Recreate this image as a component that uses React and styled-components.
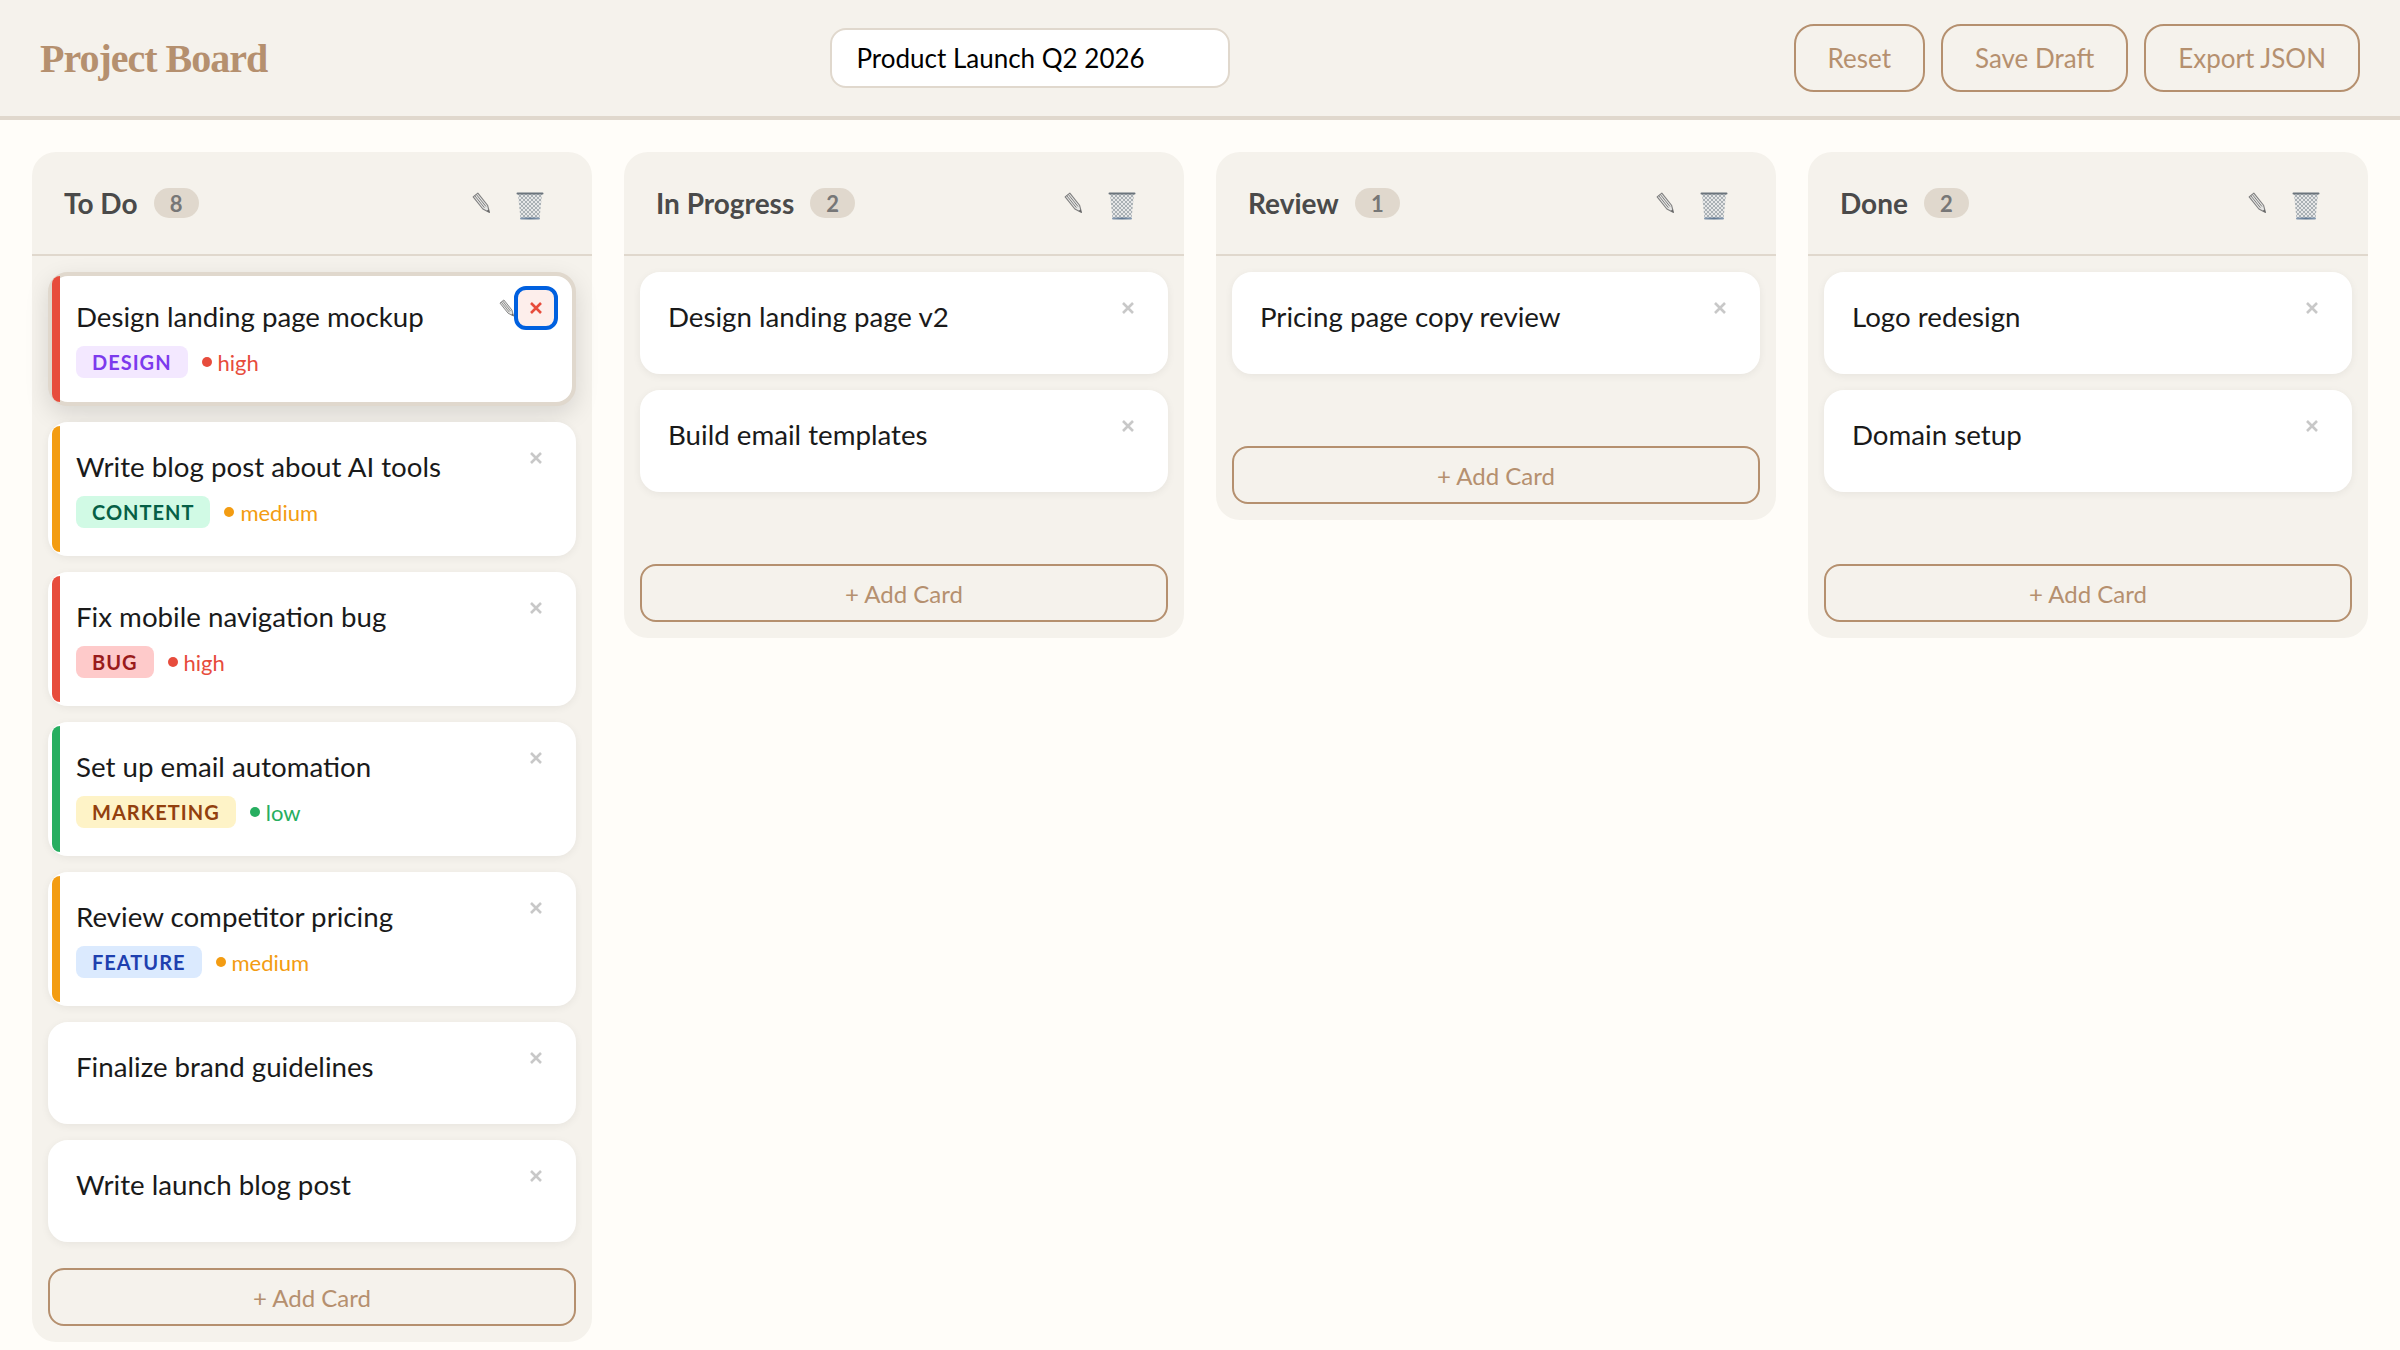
import React from 'react';
import styled, { createGlobalStyle } from 'styled-components';

const GlobalStyle = createGlobalStyle`
  html, body {
    margin: 0;
    background: #fffdf9;
    font-family: Lato, "Open Sans", sans-serif;
  }
  * {
    box-sizing: border-box;
  }
`;

const Page = styled.div`
  min-height: 100vh;
  background: #fffdf9;
`;

const Header = styled.header`
  display: flex;
  align-items: center;
  justify-content: space-between;
  height: 120px;
  padding: 0 40px;
  background: #f5f2ec;
  border-bottom: 4px solid #e0d8cd;
`;

const Logo = styled.h1`
  margin: 0;
  font-family: "Liberation Serif", serif;
  font-size: 40px;
  font-weight: 700;
  color: #b5906f;
  letter-spacing: -1px;
`;

const BoardName = styled.input`
  width: 400px;
  height: 60px;
  padding: 0 24px;
  font-family: Lato, sans-serif;
  font-size: 26px;
  color: #000;
  background: #fff;
  border: 2px solid #e0d8cd;
  border-radius: 16px;
`;

const Actions = styled.div`
  display: flex;
  gap: 16px;
`;

const HeaderButton = styled.button`
  height: 68px;
  padding: 0 32px;
  font-family: Lato, sans-serif;
  font-size: 26px;
  color: #b5906f;
  background: transparent;
  border: 2px solid #b5906f;
  border-radius: 20px;
`;

const Board = styled.main`
  display: grid;
  grid-template-columns: repeat(4, 560px);
  gap: 32px;
  align-items: start;
  padding: 32px;
`;

const Column = styled.section`
  background: #f5f2ec;
  border-radius: 24px;
`;

const ColumnHeader = styled.div`
  display: flex;
  align-items: center;
  height: 104px;
  padding: 0 48px 0 32px;
  border-bottom: 2px solid #e0d8cd;
`;

const ColumnTitle = styled.h2`
  margin: 0;
  font-size: 28px;
  font-weight: 700;
  color: #4a4a4a;
`;

const CountBadge = styled.span`
  display: flex;
  align-items: center;
  justify-content: center;
  width: 45px;
  height: 30px;
  margin-left: 16px;
  font-size: 22px;
  font-weight: 700;
  color: #777;
  background: #e0d8cd;
  border-radius: 15px;
`;

const ColumnTools = styled.div`
  display: flex;
  align-items: center;
  gap: 26px;
  margin-left: auto;
`;

const CardList = styled.div`
  display: flex;
  flex-direction: column;
  gap: 16px;
  padding: 16px 16px ${({ $spare }) => ($spare ? '72px' : '26px')};
`;

const Card = styled.article`
  position: relative;
  display: flex;
  background: #fff;
  border: 4px solid ${({ $active }) => ($active ? '#e0d8cd' : '#fff')};
  border-radius: 20px;
  box-shadow: ${({ $active }) => ($active ? '0 8px 24px rgba(0, 0, 0, 0.12)' : '0 2px 8px rgba(0, 0, 0, 0.06)')};
`;

const Stripe = styled.div`
  flex: none;
  width: 8px;
  background: ${({ $color }) => $color || 'transparent'};
  border-radius: 12px 0 0 12px;
`;

const CardBody = styled.div`
  flex: 1;
  padding: 22px 16px 24px;
`;

const CardTitle = styled.div`
  margin-bottom: 10px;
  font-size: 27.7px;
  line-height: 38px;
  color: #1a1a1a;
`;

const CardMeta = styled.div`
  display: flex;
  align-items: center;
  gap: 14px;
`;

const Tag = styled.span`
  height: 32px;
  padding: 0 16px;
  font-size: 20px;
  font-weight: 700;
  line-height: 32px;
  letter-spacing: 1px;
  text-transform: uppercase;
  color: ${({ $color }) => $color};
  background: ${({ $bg }) => $bg};
  border-radius: 8px;
`;

const Priority = styled.span`
  display: flex;
  align-items: center;
  gap: 6px;
  font-size: 22px;
  color: ${({ $color }) => $color};

  &::before {
    content: '';
    width: 10px;
    height: 10px;
    background: currentColor;
    border-radius: 50%;
  }
`;

const CardTools = styled.div`
  position: absolute;
  top: 10px;
  right: 14px;
  display: flex;
  align-items: center;
`;

const CloseButton = styled.button`
  display: flex;
  align-items: center;
  justify-content: center;
  width: 44px;
  height: 44px;
  padding: 0;
  font-family: Lato, sans-serif;
  color: ${({ $active }) => ($active ? '#e74c3c' : '#c8c8c8')};
  background: ${({ $active }) => ($active ? '#fdeeeb' : 'transparent')};
  border: ${({ $active }) => ($active ? '4px solid #0060df' : '0')};
  border-radius: 12px;
`;

const AddCard = styled.button`
  display: block;
  width: 528px;
  height: 58px;
  margin: 0 16px 16px;
  font-family: Lato, sans-serif;
  font-size: 24px;
  color: #b5906f;
  background: transparent;
  border: 2px solid #b5906f;
  border-radius: 16px;
`;

const IconSlot = styled.span`
  display: flex;
  margin-top: ${({ $drop }) => $drop || 0}px;
`;

const PencilIcon = ({ size = 18 }) => (
  <svg width={size} height={size * 1.17} viewBox="0 0 18 21">
    <path d="M5.84 1.13 L1.16 4.88 L10.86 17 L17.5 20.5 L15.54 13.2 Z" fill="#e4e4e2" stroke="#808080" strokeWidth="1.1" strokeLinejoin="round" />
    <path d="M4.28 2.38 L13.98 14.5 M2.72 3.63 L12.42 15.7" stroke="#808080" strokeWidth="1" />
    <path d="M14.6 18.9 L17.5 20.5 L16.7 17.2 Z" fill="#666" />
  </svg>
);

const TrashIcon = () => (
  <svg width="28" height="28" viewBox="0 0 28 28">
    <defs>
      <pattern id="mesh" width="4" height="4" patternUnits="userSpaceOnUse">
        <rect width="4" height="4" fill="#e6e7e7" />
        <path d="M0 0 L4 4 M4 0 L0 4" stroke="#a3a9ae" strokeWidth="0.9" />
      </pattern>
      <linearGradient id="band" x1="0" x2="1" y1="0" y2="0">
        <stop offset="0" stopColor="#8a9db3" />
        <stop offset="0.5" stopColor="#5f7690" />
        <stop offset="1" stopColor="#8a9db3" />
      </linearGradient>
    </defs>
    <path d="M2 2 L26 2 L23.5 27 L4.5 27 Z" fill="url(#mesh)" />
    <rect x="0.5" y="0.5" width="27" height="2" rx="1" fill="#6b747c" />
    <rect x="4" y="25.4" width="20" height="2.2" rx="1" fill="url(#band)" />
  </svg>
);

const columns = [
  {
    title: 'To Do',
    count: 8,
    cards: [
      { title: 'Design landing page mockup', stripe: '#e74c3c', tag: 'design', priority: 'high', active: true },
      { title: 'Write blog post about AI tools', stripe: '#f39c12', tag: 'content', priority: 'medium' },
      { title: 'Fix mobile navigation bug', stripe: '#e74c3c', tag: 'bug', priority: 'high' },
      { title: 'Set up email automation', stripe: '#27ae60', tag: 'marketing', priority: 'low' },
      { title: 'Review competitor pricing', stripe: '#f39c12', tag: 'feature', priority: 'medium' },
      { title: 'Finalize brand guidelines' },
      { title: 'Write launch blog post' },
    ],
  },
  {
    title: 'In Progress',
    count: 2,
    spare: true,
    cards: [{ title: 'Design landing page v2' }, { title: 'Build email templates' }],
  },
  {
    title: 'Review',
    count: 1,
    spare: true,
    cards: [{ title: 'Pricing page copy review' }],
  },
  {
    title: 'Done',
    count: 2,
    spare: true,
    cards: [{ title: 'Logo redesign' }, { title: 'Domain setup' }],
  },
];

const tagColors = {
  design: { bg: '#f3e8ff', color: '#7c3aed' },
  content: { bg: '#d1fae5', color: '#065f46' },
  bug: { bg: '#fecaca', color: '#991b1b' },
  marketing: { bg: '#fef3c7', color: '#92400e' },
  feature: { bg: '#dbeafe', color: '#1e40af' },
};

const priorityColors = {
  high: '#e74c3c',
  medium: '#f39c12',
  low: '#27ae60',
};

const BoardCard = ({ card }) => (
  <Card $active={card.active}>
    <Stripe $color={card.stripe} />
    <CardBody>
      <CardTitle>{card.title}</CardTitle>
      {card.tag && (
        <CardMeta>
          <Tag $bg={tagColors[card.tag].bg} $color={tagColors[card.tag].color}>{card.tag}</Tag>
          <Priority $color={priorityColors[card.priority]}>{card.priority}</Priority>
        </CardMeta>
      )}
    </CardBody>
    <CardTools>
      {card.active && <IconSlot><PencilIcon size={15} /></IconSlot>}
      <CloseButton $active={card.active}>
        <svg width="14" height="14" viewBox="0 0 14 14">
          <path d="M2 2 L12 12 M12 2 L2 12" stroke="currentColor" strokeWidth="2.6" />
        </svg>
      </CloseButton>
    </CardTools>
  </Card>
);

const App = () => (
  <Page>
    <GlobalStyle />
    <Header>
      <Logo>Project Board</Logo>
      <BoardName defaultValue="Product Launch Q2 2026" />
      <Actions>
        <HeaderButton>Reset</HeaderButton>
        <HeaderButton>Save Draft</HeaderButton>
        <HeaderButton>Export JSON</HeaderButton>
      </Actions>
    </Header>
    <Board>
      {columns.map((column) => (
        <Column key={column.title}>
          <ColumnHeader>
            <ColumnTitle>{column.title}</ColumnTitle>
            <CountBadge>{column.count}</CountBadge>
            <ColumnTools>
              <IconSlot><PencilIcon /></IconSlot>
              <IconSlot $drop={5}><TrashIcon /></IconSlot>
            </ColumnTools>
          </ColumnHeader>
          <CardList $spare={column.spare}>
            {column.cards.map((card) => (
              <BoardCard key={card.title} card={card} />
            ))}
          </CardList>
          <AddCard>+ Add Card</AddCard>
        </Column>
      ))}
    </Board>
  </Page>
);

export default App;
